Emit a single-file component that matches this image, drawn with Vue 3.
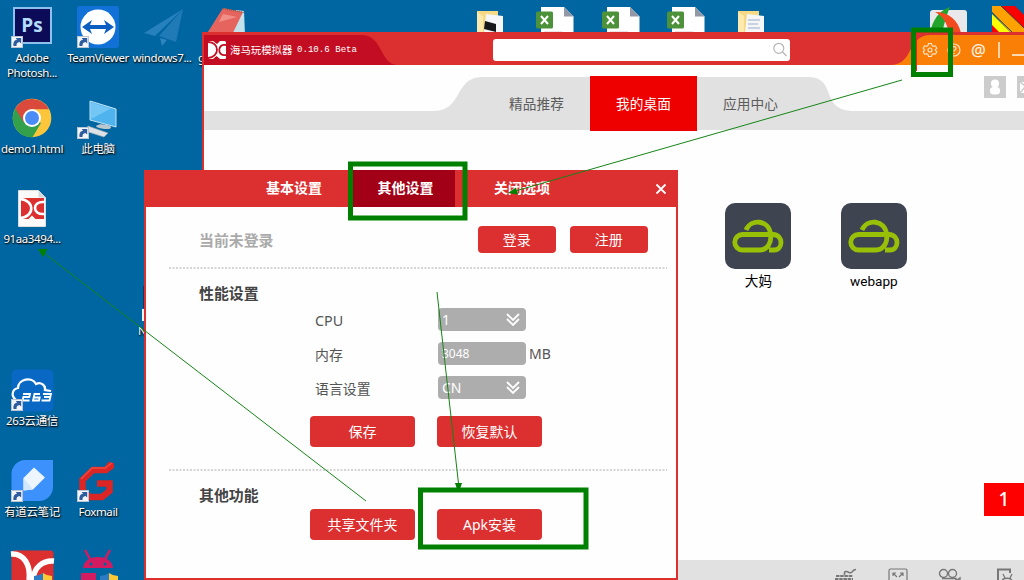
<script setup>
const icons = [
  { k: 'ps', cx: 32, y: 5, t: 'Adobe\nPhotosh...', link: true },
  { k: 'tv', cx: 98, y: 5, t: 'TeamViewer', link: true },
  { k: 'plane', cx: 162, y: 5, t: 'windows7...' },
  { k: 'chrome', cx: 32, y: 96, t: 'demo1.html' },
  { k: 'pc', cx: 98, y: 96, t: '此电脑', link: true },
  { k: 'file', cx: 32, y: 186, t: '91aa3494...' },
  { k: 'cloud', cx: 32, y: 368, t: '263云通信', link: true },
  { k: 'note', cx: 32, y: 459, t: '有道云笔记', link: true },
  { k: 'fox', cx: 98, y: 459, t: 'Foxmail', link: true },
  { k: 'haima', cx: 32, y: 549, t: '' },
  { k: 'droid', cx: 98, y: 549, t: '' },
  { k: 'pad', cx: 228, y: 5, t: 'g', cut: true },
  { k: 'hidden', cx: 168, y: 278, t: 'N', cut: true }
]
const sheets = [536, 602, 667]
const folders = [477, 738]
const apps = ['大妈', 'webapp']
</script>

<template>
  <div class="desktop">
    <div v-for="i in icons" :key="i.k" class="ico" :style="{ left: i.cx - 38 + 'px', top: i.y + 'px' }">
      <svg width="44" height="46" viewBox="0 0 44 46">
        <g v-if="i.k === 'ps'">
          <rect x="3" y="2" width="39" height="37" fill="#8fc1ee" />
          <rect x="5" y="4" width="35" height="33" fill="#0b0b58" />
          <text x="22" y="27" text-anchor="middle" class="ps">Ps</text>
        </g>
        <g v-else-if="i.k === 'tv'">
          <rect x="1" y="1" width="42" height="42" rx="3" fill="#1271d6" />
          <circle cx="22" cy="22" r="17.5" fill="#fff" />
          <path d="M6 22l10-7-2 5h16l-2-5 10 7-10 7 2-5H14l2 5z" fill="#0b5fc0" />
        </g>
        <g v-else-if="i.k === 'plane'">
          <path d="M43 4L4 28l11 3z" fill="#2680bc" />
          <path d="M43 4L19 31l17 6z" fill="#1f7ab6" />
          <path d="M20 33l7 2-5 6z" fill="#2d84be" />
        </g>
        <g v-else-if="i.k === 'chrome'">
          <circle cx="22" cy="22" r="19.3" fill="#fbc63c" />
          <path d="M22 22L5.3 12.4A19.3 19.3 0 0 0 22.5 41.3L31 27z" fill="#33a04b" />
          <path d="M5.3 12.4A19.3 19.3 0 0 1 38.9 13.2H22L13.5 26z" fill="#d94a3d" />
          <circle cx="22" cy="22" r="9" fill="#fff" />
          <circle cx="22" cy="22" r="7" fill="#4b8bf5" />
        </g>
        <g v-else-if="i.k === 'pc'">
          <path d="M14 5l26 8v18L14 24z" fill="#4fb4ee" stroke="#c5e4f5" stroke-width="1" />
          <path d="M15 6.5l20 6L15 23z" fill="#74c6f5" />
          <path d="M24 28l10 3-1 2-8-1-5-1z" fill="#8ea0ac" />
          <path d="M20 30c4-3 16-1 15 2-2 2-13 1-15-2z" fill="#bcc8d0" />
          <path d="M12 30l20 7-4 4-19-6z" fill="#dce2e6" stroke="#97a5ae" stroke-width=".6" />
        </g>
        <g v-else-if="i.k === 'file'">
          <path d="M8.5 4.5h20l7 7v29h-27z" fill="#fafafa" stroke="#ddd" />
          <path d="M28.5 4.5l7 7h-7z" fill="#d4d9dc" />
          <rect x="11" y="12" width="23" height="21" fill="#dc2f30" />
          <path d="M10 13c15 1 15 18 0 19M34 16c-12-1-12 13 0 12" fill="none" stroke="#fff" stroke-width="2.6" />
          <path d="M18 33.5l4-4 4 4z" fill="#fafafa" />
        </g>
        <g v-else-if="i.k === 'cloud'">
          <rect x="1.5" y="1.5" width="42" height="42" rx="5" fill="#0968c4" />
          <path d="M6 32C0 27 3 21 8 20C8 11 22 8 26 16C31 13 36 18 35 22L41 23" fill="none" stroke="#fff" stroke-width="2.2" />
          <path d="M13 26h7l-.7 3h-6l-.8 3.5h7M30 26h-5.500l-1.500 6.500h6l.7-3h-6M33 26h8l-1.500 6.500h-8M34 29h6" fill="none" stroke="#fff" stroke-width="1.8" />
        </g>
        <g v-else-if="i.k === 'note'">
          <path d="M15 1h28v27a14 14 0 0 1-14 14H1.500V15A14 14 0 0 1 15 1z" fill="#3c91fc" />
          <path d="M24 8.500l11 10-12 12-9.500 1V19z" fill="#edf5ff" />
          <path d="M13.5 19L23 30.500l-9.500 1z" fill="#d2e6fc" />
        </g>
        <g v-else-if="i.k === 'fox'">
          <path d="M36 4.500L30 11H17L6.500 21V31.500L13.500 38H26L33.500 32V24.500H21" fill="none" stroke="#dc2525" stroke-width="6.5" />
          <path d="M31 4h7v5l-4 3z" fill="#dc2525" />
          <path d="M36 4l-7 5H16L5 20" fill="none" stroke="#f04a40" stroke-width="1.5" />
        </g>
        <g v-else-if="i.k === 'haima'">
          <rect x="1.5" y="1.500" width="42" height="44" rx="3" fill="#dc2f30" />
          <path d="M1 5c12-1 20 10 18 26M44 12c-11-1-20 6-21 19" fill="none" stroke="#fff" stroke-width="5.5" />
        </g>
        <g v-else-if="i.k === 'droid'">
          <path d="M7 19c1-7 6-11 15-11s14 4 15 11zM5 24h15v20H5z" fill="#d31c5f" />
          <path d="M9 1l5 9M34 1l-5 9" stroke="#d31c5f" stroke-width="2.5" />
          <circle cx="15" cy="15" r="1.5" fill="#0066a1" /><circle cx="29" cy="15" r="1.500" fill="#0066a1" />
        </g>
        <g v-else-if="i.k === 'pad'">
          <path d="M30 5l8 1 1 24H24z" fill="#c4e2ec" />
          <path d="M17 3l20 4L24 34 0 30z" fill="#e5655e" />
          <path d="M17 9l14 3-18 5z" fill="#f08f87" />
          <path d="M17 3.500l21 4" stroke="#8a5a4c" stroke-width="1.5" stroke-dasharray="1 1" />
        </g>
        <g v-else class="sliver">
          <rect x="-3" y="8" width="36" height="22" fill="#123a68" />
          <rect x="-4" y="31" width="12" height="12" fill="#f2f5f9" />
        </g>
        <g v-if="i.link">
          <rect x="1.5" y="31.5" width="11" height="11" fill="#f2f5f9" stroke="#b9c4d0" />
          <path d="M3.5 41c-.5-4 1-6 3.500-6.300L5.800 33h5.400v5.400L9.500 37c-2.500.3-3 1.500-3 4z" fill="#2d5c9f" />
        </g>
        <g v-if="i.k === 'haima' || i.k === 'droid'">
          <path d="M24 27q5 0 9-3v22h-9z" fill="#2b7cc4" /><path d="M33 24q4 3 9 3v19h-9z" fill="#fcc936" />
        </g>
      </svg>
      <span class="lbl" :class="{ cut: i.cut }">{{ i.t }}</span>
    </div>

    <svg v-for="x in folders" :key="x" class="top" :style="{ left: x + 'px' }" width="28" height="28" viewBox="0 0 28 28">
      <path d="M0 6h21v22H0z" fill="#f6d984" /><path d="M0 7l6 4v17H0z" fill="#fbe9ae" />
      <path d="M9 9l17 2v17H7z" fill="#f4f6f8" />
      <path v-if="x < 500" d="M8 16l11 3v8L7 24z" fill="#15181b" />
      <path v-else d="M10 15h12M10 19h10M10 23h12" stroke="#b7c6da" stroke-width="1.5" />
    </svg>
    <svg v-for="x in sheets" :key="x" class="top" :style="{ left: x + 'px' }" width="39" height="28" viewBox="0 0 39 28">
      <path d="M5 2h23l9.500 9.500V28H5z" fill="#fff" /><path d="M28 2l9.500 9.500H28z" fill="#9298a5" />
      <rect x="0" y="6.500" width="17" height="17" rx="1.5" fill="#4d913a" />
      <path d="M5 11l7 8M12 11l-7 8" stroke="#fff" stroke-width="2" /><path d="M8 27h18" stroke="#ccc" />
    </svg>
    <svg class="top" :style="{ left: '929px' }" width="40" height="28" viewBox="0 0 40 28">
      <rect x="1" y="5" width="37" height="30" rx="3" fill="#e9e9ec" />
      <path d="M1 28C4 14 10 6 21 2c-3 7-5 14-8 26z" fill="#23a52d" />
      <path d="M6 7c14 0 23 8 26 21H20C18 18 14 11 6 7z" fill="#f2491f" />
    </svg>
    <svg class="top" :style="{ left: '992px' }" width="32" height="28" viewBox="0 0 32 28">
      <path d="M0 1h10l22 20v7H19L0 7z" fill="#ffa200" /><path d="M9 1h14l9 9v13z" fill="#f80000" />
      <path d="M0 9l19 19H0z" fill="#ff0" /><path d="M0 7.500l21 20.500M9 1l23 22" stroke="#345" />
      <path d="M0 20l8 8H0z" fill="#f80000" />
    </svg>

    <main class="window">
      <header class="bar">
        <svg class="swoosh" width="820" height="30" viewBox="0 0 820 30">
          <path d="M0 0H157C180 0 175 30 194 30H0z" fill="#c20d22" />
          <path d="M686 30C711 30 702 0 727 0H820V30z" fill="#fa7f06" />
        </svg>
        <svg class="logo" width="18" height="18" viewBox="0 0 18 18">
          <rect width="18" height="18" rx="1.5" fill="#fff" />
          <path d="M0 1c12 0 12 15 0 16M18 4c-9-2-9 12 0 10" fill="none" stroke="#c20d22" stroke-width="1.8" />
          <path d="M5 0h7L9 3zM5 18l3.500-3 3.500 3z" fill="#c20d22" />
        </svg>
        <span class="name">海马玩模拟器</span><span class="ver">0.10.6 Beta</span>
        <div class="search">
          <svg width="16" height="16" viewBox="0 0 16 16" fill="none" stroke="#b5b5b5" stroke-width="1.2">
            <circle cx="6.8" cy="6.300" r="5" /><path d="M10.500 10l4 4" />
          </svg>
        </div>
        <div class="tools">
          <svg width="16" height="16" viewBox="0 0 16 16" fill="none" stroke="#ffe4c8" stroke-width="1.15">
            <path d="M6.600 1.500h2.800l.6 2 1.300.8 2.100-.5 1.400 2.400L13.300 8l1.500 1.800-1.400 2.400-2.100-.5-1.300.8-.6 2H6.600l-.6-2-1.300-.8-2.100.5-1.400-2.400L2.700 8 1.200 6.200l1.400-2.400 2.100.5L6 3.500z" />
            <circle cx="8" cy="8" r="2" />
          </svg>
          <svg width="14" height="14" viewBox="0 0 14 14" fill="none" stroke="#ffe4c8" stroke-width="1.2">
            <circle cx="7" cy="7" r="6" /><path d="M5 5.500C5 3 9 3 9 5.500 9 7 7 7 7 8.500M7 10v1" />
          </svg>
          <span class="at">@</span><i class="sep"></i><i class="min"></i>
        </div>
      </header>

      <nav class="nav">
        <svg class="shape" width="820" height="55" viewBox="0 0 820 55">
          <path d="M0 35H230C259 35 250 1 278 1H604C634 1 615 35 650 35H820V54H0z" fill="#e1e1e1" />
        </svg>
        <a>精品推荐</a><a class="on">我的桌面</a><a>应用中心</a>
        <div class="user">
          <svg width="22" height="22" viewBox="0 0 22 22"><path fill="#ccc" d="M0 0h22v22H0z" /><circle cx="11" cy="7.500" r="4" fill="#fff" /><rect x="6" y="11" width="10" height="7.500" rx="3.500" fill="#fff" /></svg>
          <svg width="22" height="22" viewBox="0 0 22 22"><path fill="#ccc" d="M0 0h22v22H0z" /><path d="M3 6h16v11H3z" fill="#fff" /><path d="M3 6l8 6M3 17l5-6" stroke="#ccc" stroke-width="1.5" /></svg>
        </div>
      </nav>

      <section class="apps">
        <div v-for="a in apps" :key="a" class="app">
          <svg width="66" height="66" viewBox="0 0 66 66">
            <rect width="66" height="66" rx="10" fill="#3e4550" />
            <path d="M21 27C26 15 44 17 45.500 31C47 40 42 47 35 47H17.500A7.700 7.700 0 0 1 17.500 31.500H48C59 32 58 47 49 47H44" fill="none" stroke="#98c007" stroke-width="4.8" />
          </svg>
          <span>{{ a }}</span>
        </div>
      </section>

      <div class="page">1</div>
      <footer class="foot">
        <svg width="24" height="12" viewBox="0 0 24 12" fill="none" stroke="#777">
          <path d="M1 8h17M0 11h18" stroke-width="2.2" stroke-dasharray="3.500 .7" /><path d="M9.500 7V4.500C10 3 12 3.500 14 4.500 19 6 16 1.500 21 1.500" stroke-width="1.5" />
        </svg>
        <svg width="20" height="12" viewBox="0 0 20 12" fill="none" stroke="#777" stroke-width="1.2">
          <rect x="1" y="1" width="18" height="16" rx="1.5" /><path d="M5 8V5h3M5 5l4 4M12 5h3v3M15 5l-4 4" />
        </svg>
        <svg width="26" height="12" viewBox="0 0 26 12" fill="none" stroke="#777" stroke-width="1.4">
          <circle cx="5.5" cy="5.500" r="4" /><circle cx="14.5" cy="5.500" r="4" /><path d="M4 10.500h14v5M18 13l4-3v5" />
        </svg>
        <svg width="20" height="12" viewBox="0 0 20 12" fill="none" stroke="#777" stroke-width="1.3">
          <path d="M14 5V1.500H2v14" stroke-width="2" /><path d="M6 14c0-5 10-5 10 0M7 6l2 4M16 6l-2 4" />
        </svg>
      </footer>
    </main>

    <section class="dialog">
      <header class="dhead">
        <a class="t1">基本设置</a><a class="t2">其他设置</a><a class="t3">关闭选项</a>
        <svg width="12" height="12" viewBox="0 0 12 12"><path d="M1.500 1.500l9 9M10.500 1.500l-9 9" stroke="#fff" stroke-width="1.8" /></svg>
      </header>
      <div class="login">
        <h3>当前未登录</h3><button class="small">登录</button><button class="small">注册</button>
      </div>
      <svg class="rule" width="498" height="2"><path d="M0 1h498" stroke="#c8c8c8" stroke-width="1.6" stroke-dasharray="2 1.500" /></svg>
      <div class="perf">
        <h3>性能设置</h3>
        <div class="row"><label class="en">CPU</label><div class="field">1
          <svg width="14" height="14" viewBox="0 0 14 14" fill="none" stroke="#fff" stroke-width="1.9"><path d="M1 1l6 6 6-6M1 6l6 6 6-6" /></svg></div></div>
        <div class="row"><label>内存</label><div class="field num">3048</div><span class="mb">MB</span></div>
        <div class="row"><label>语言设置</label><div class="field">CN
          <svg width="14" height="14" viewBox="0 0 14 14" fill="none" stroke="#fff" stroke-width="1.9"><path d="M1 1l6 6 6-6M1 6l6 6 6-6" /></svg></div></div>
        <div class="btns"><button>保存</button><button>恢复默认</button></div>
      </div>
      <svg class="rule" width="498" height="2"><path d="M0 1h498" stroke="#c8c8c8" stroke-width="1.6" stroke-dasharray="2 1.500" /></svg>
      <div class="other">
        <h3>其他功能</h3>
        <div class="btns last"><button>共享文件夹</button><button>Apk安装</button></div>
      </div>
    </section>

    <svg class="marks" width="1024" height="580" viewBox="0 0 1024 580">
      <path d="M916.500 71V32.500H948.500V71" fill="none" stroke="#e8252a" />
      <g fill="none" stroke="#008000" stroke-width="5">
        <rect x="350.5" y="164" width="114.5" height="54" />
        <rect x="913.5" y="30" width="37" height="44.5" />
        <rect x="420.5" y="490" width="165.5" height="57" />
      </g>
      <path d="M902 80L510 192.500M366 501L40 250M437 292L459 488" stroke="#158515" stroke-width="1" />
      <path d="M508 193l8-5.500 2 7zM38 249h9.500l-4.500 8zM455 483h7l-2 6h-3z" fill="#008000" />
    </svg>
  </div>
</template>

<style>
body { overflow: hidden; }
</style>

<style scoped>
.desktop { position: relative; width: 1024px; height: 580px; overflow: hidden; background: #0066a1; font-family: "Noto Sans", "Noto Sans CJK SC", sans-serif; }
.desktop * { box-sizing: border-box; }
svg { display: block; flex: none; }
.ico { position: absolute; width: 76px; display: flex; flex-direction: column; align-items: center; }
.ico svg { overflow: visible; }
.lbl { color: #fff; font-size: 11.5px; line-height: 15px; letter-spacing: -.4px; text-align: center; white-space: pre; margin-top: -1px; text-shadow: 1px 1px 2px #000, 0 1px 1px #0009; }
.cut { align-self: flex-start; margin-left: 8px; }
.ps { font: bold 19px "Open Sans", sans-serif; fill: #b4dcff; }
.top { position: absolute; top: 5px; }
.window { position: absolute; left: 202px; top: 32px; width: 822px; height: 548px; background: #fefefe; border-left: 2px solid #dc2f30; display: flex; flex-direction: column; }
.bar { position: relative; height: 33px; flex: none; padding-top: 3px; background: #dc2f30; display: flex; align-items: center; color: #fff; }
.swoosh { position: absolute; left: 0; top: 3px; }
.bar > :not(.swoosh) { position: relative; flex: none; }
.logo { margin-left: 4px; }
.name { margin-left: 4px; width: 67px; font: 10.4px/30px "Noto Sans CJK SC", sans-serif; white-space: nowrap; }
.ver { font: 9.1px/32px "Liberation Mono", monospace; width: 64px; white-space: nowrap; }
.search { margin-left: 132px; width: 297px; height: 22px; background: #fff; border-radius: 3px; display: flex; align-items: center; justify-content: flex-end; padding-right: 2px; }
.tools { margin-left: 132px; display: flex; align-items: center; }
.tools > * { flex: none; }
.tools svg + svg { margin-left: 9px; }
.at { margin-left: 10px; width: 17px; font: 500 16.5px/28px "Noto Sans", sans-serif; color: #fff0e0; }
.sep { width: 1.5px; height: 16px; margin-left: 10px; background: #ffd2a4; }
.min { width: 14px; height: 2px; margin: 9px 0 0 12.5px; background: #ffd9b2; }
.nav { position: relative; height: 55px; margin-top: 11px; padding-left: 279px; display: flex; flex: none; }
.shape { position: absolute; left: 0; top: 0; }
.nav a { position: relative; flex: none; width: 107px; text-align: center; font: 13.7px/55px "Noto Sans CJK SC", sans-serif; color: #5c5c5c; }
.nav .on { background: #ee0000; color: #fff; }
.user { position: relative; display: flex; gap: 11px; margin-left: 180px; }
.apps { display: flex; gap: 49.5px; margin: 72px 0 0 521.4px; }
.app { width: 66px; display: flex; flex-direction: column; align-items: center; font: 400 13.6px/24px Roboto, "Noto Sans CJK SC", sans-serif; color: #000; }
.app span { line-height: 25px; }
.page { margin: auto 0 44px auto; width: 40px; height: 33px; background: #f00; color: #fff; font: 500 19px/33px "Noto Sans", sans-serif; text-align: center; }
.foot { height: 20px; flex: none; background: #e1e1e1; display: flex; align-items: flex-end; padding: 0 0 0 631px; overflow: hidden; }
.foot svg:nth-child(2) { margin-left: 29px; }
.foot svg:nth-child(3) { margin-left: 30px; }
.foot svg:nth-child(4) { margin-left: 32px; }
.dialog { position: absolute; left: 144px; top: 170px; width: 534px; height: 410px; background: #fefefe; border: 2px solid #dc2f30; border-top: 0; padding: 0 9px 0 23px; }
.dhead { height: 37px; margin: 0 -9px 0 -23px; background: #dc2f30; display: flex; align-items: center; color: #fff; font: bold 14px/35px "Noto Sans CJK SC", sans-serif; }
.dhead a { text-align: center; height: 37px; }
.t1 { width: 118px; margin-left: 89px; }
.t2 { width: 102px; background: #a20016; padding-left: 3px; }
.t3 { width: 134px; }
.dhead svg { margin-left: 66px; }
h3 { margin: 0; font: bold 14.9px/20px "Noto Sans CJK SC", sans-serif; color: #444; }
.login { height: 60px; display: flex; align-items: center; padding: 5px 19px 0 30px; gap: 13.5px; }
.login h3 { color: #aaa; margin-right: auto; }
button { width: 105px; height: 31px; padding: 0; border: 0; border-radius: 4px; background: #dc2f30; color: #fff; font: 14px/31px "Noto Sans", "Noto Sans CJK SC", sans-serif; }
.small { width: 78.5px; height: 26.5px; line-height: 28px; }
.perf { height: 200px; padding: 14px 0 0 30px; }
.row { display: flex; height: 23px; margin: 5px 0 11px 117px; align-items: center; }
.row + .row { margin-top: 0; }
label { width: 122px; font: 13.9px/24px "Noto Sans CJK SC", sans-serif; color: #555; padding-top: 1px; margin-left: -1px; margin-right: 1px; }
.en { font-family: "Noto Sans", sans-serif; font-size: 14.3px; padding-top: 3px; }
.field { width: 88px; height: 23px; padding: 0 6px 0 4px; border-radius: 4px; background: #adadad; color: #fff; font-size: 14px; line-height: 23px; display: flex; align-items: center; justify-content: space-between; }
.num { font-size: 12px; }
.mb { margin-left: 3px; font-size: 14px; color: #555; }
.btns { display: flex; gap: 22px; margin: 17px 0 0 111px; }
.other { padding: 14px 0 0 30px; }
.last { margin-top: 4px; }
.row + .btns { margin-top: 17px; }
.marks { position: absolute; left: 0; top: 0; }
</style>
